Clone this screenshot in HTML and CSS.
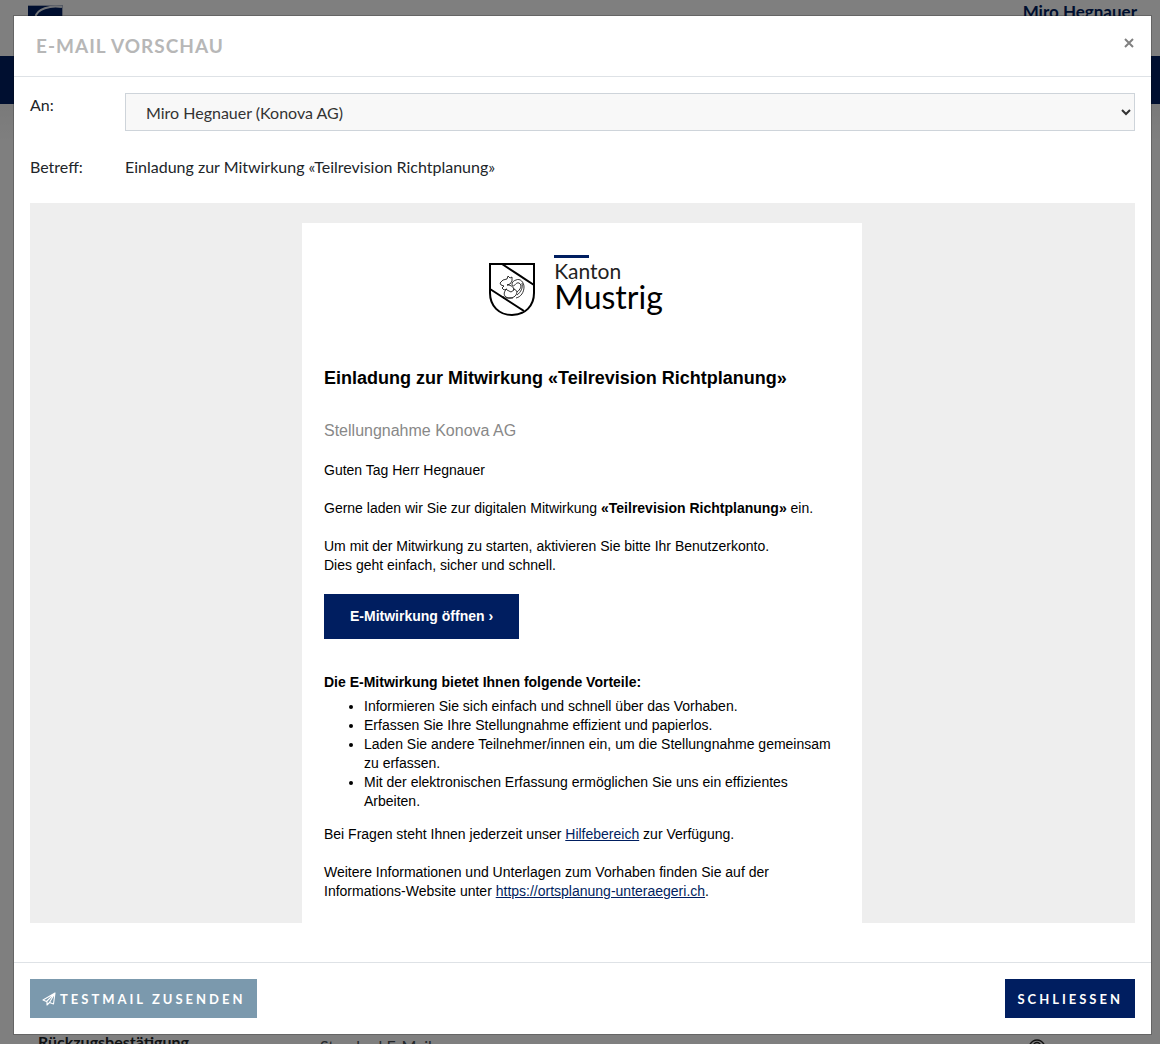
FILE: index.html
```html
<!DOCTYPE html>
<html lang="de">
<head>
<meta charset="utf-8">
<title>E-Mail Vorschau</title>
<link rel="stylesheet" href="styles.css">
</head>
<body>
<div class="page" aria-hidden="true">
  <div class="page-header">
    <svg class="page-logo" viewBox="0 0 35 35"><rect width="35" height="35" fill="#001e60"/><path d="M34.500 .5v34M0 .5h35" stroke="#aab4c8" stroke-width="1"/><path d="M34 2C22 0 9 4 7.500 12v10" fill="none" stroke="#e4e8ee" stroke-width="2"/></svg>
    <span class="page-user">Miro Hegnauer</span>
  </div>
  <div class="page-nav"></div>
  <div class="page-content">
    <div class="page-row">
      <strong class="row-name">Rückzugsbestätigung</strong>
      <span class="row-kind">Standard E-Mail</span>
      <svg class="row-icon" viewBox="0 0 18 14" fill="none" stroke="#222" stroke-width="1.5"><path d="M1 7C3 3 6 1 9 1s6 2 8 6c-2 4-5 6-8 6S3 11 1 7z"/><circle cx="9" cy="7" r="3.500"/></svg>
    </div>
  </div>
</div>
<div class="backdrop"></div>
<div class="modal" role="dialog" aria-labelledby="modal-title">
  <header class="modal-header">
    <h1 class="modal-title" id="modal-title">E-MAIL VORSCHAU</h1>
    <button class="close" type="button" aria-label="Schliessen"><svg viewBox="0 0 10 10" width="10" height="10"><path d="M1 1l8 8M9 1L1 9" stroke="#808080" stroke-width="2"/></svg></button>
  </header>
  <main class="modal-body">
    <div class="field">
      <label class="field-label" for="recipient">An:</label>
      <select class="recipient" id="recipient"><option>Miro Hegnauer (Konova AG)</option></select>
    </div>
    <div class="field">
      <span class="field-label">Betreff:</span>
      <span class="subject">Einladung zur Mitwirkung «Teilrevision Richtplanung»</span>
    </div>
    <div class="preview">
      <article class="mail">
        <div class="brand">
          <svg class="shield" viewBox="0 0 47 54" fill="none" stroke="#000">
            <path d="M1 1h44v29c0 13-9 22-22 22S1 43 1 30z" stroke-width="2"/>
            <path d="M13 1l32 21M1 26l34 22" stroke-width="2"/>
            <path d="M15 23l-3-1-1-2 3-3 4-1 1-3 2 2 2-1 0 4-2 3-3 1c4 0 7 2 7 5l-3 2-4-2M15 23l-2 2 2 2 3-1M18 26c-3 2-4 6-1 8 3 2 8 1 10-2 2-3 0-6-3-6M15 33l-1 2h10M27 35c5-1 8-6 8-11s-4-9-8-7c-4 1-5 5-3 6 2 0 3-4 6-3 4 2 1 7-2 9M33 20c1 5-1 9-5 12" stroke-width=".8"/>
          </svg>
          <div class="brand-name">
            <span class="brand-top">Kanton</span>
            <span class="brand-main">Mustrig</span>
          </div>
        </div>
        <h2 class="mail-title">Einladung zur Mitwirkung «Teilrevision Richtplanung»</h2>
        <p class="mail-sub">Stellungnahme Konova AG</p>
        <p>Guten Tag Herr Hegnauer</p>
        <p>Gerne laden wir Sie zur digitalen Mitwirkung <strong>«Teilrevision Richtplanung»</strong> ein.</p>
        <p>Um mit der Mitwirkung zu starten, aktivieren Sie bitte Ihr Benutzerkonto.<br>Dies geht einfach, sicher und schnell.</p>
        <a class="mail-button" href="#">E-Mitwirkung öffnen ›</a>
        <h3 class="mail-heading">Die E-Mitwirkung bietet Ihnen folgende Vorteile:</h3>
        <ul class="benefits">
          <li>Informieren Sie sich einfach und schnell über das Vorhaben.</li>
          <li>Erfassen Sie Ihre Stellungnahme effizient und papierlos.</li>
          <li>Laden Sie andere Teilnehmer/innen ein, um die Stellungnahme gemeinsam zu erfassen.</li>
          <li>Mit der elektronischen Erfassung ermöglichen Sie uns ein effizientes Arbeiten.</li>
        </ul>
        <p>Bei Fragen steht Ihnen jederzeit unser <a href="#">Hilfebereich</a> zur Verfügung.</p>
        <p>Weitere Informationen und Unterlagen zum Vorhaben finden Sie auf der Informations-Website unter <a href="#">https://ortsplanung-unteraegeri.ch</a>.</p>
      </article>
    </div>
  </main>
  <footer class="modal-footer">
    <button class="btn btn-test" type="button"><svg viewBox="0 0 14 14" width="14" height="14" fill="none" stroke="#fff" stroke-width="1.1" stroke-linejoin="round"><path d="M13 1L1 8l3.500 1.500L13 1l-1.500 11-4-1.500L5 13V9.500M13 1L7.500 10.500"/></svg>TESTMAIL ZUSENDEN</button>
    <button class="btn btn-close" type="button">SCHLIESSEN</button>
  </footer>
</div>
</body>
</html>
```
FILE: styles.css
```css
* { box-sizing: border-box; }

body {
  margin: 0;
  padding: 15px 8px 9px 13px;
  font-family: Lato, sans-serif;
  font-size: 16px;
  line-height: 24px;
  color: #212529;
}

/* Page behind the dialog */
.page {
  position: fixed;
  inset: 0;
  display: flex;
  flex-direction: column;
  overflow: hidden;
  background: #fff;
}
.page-header {
  display: flex;
  justify-content: space-between;
  height: 56px;
  padding: 0 23px 0 28px;
}
.page-logo { width: 35px; height: 35px; margin-top: 5px; }
.page-user { font-size: 17px; font-weight: 700; color: #001e60; }
.page-nav { height: 48px; background: #001e60; }
.page-content {
  flex: 1;
  display: flex;
  align-items: flex-end;
  background: linear-gradient(#f4f4f4, #fff 40px);
}
.page-row {
  flex: 1;
  display: grid;
  grid-template-columns: 282px 1fr 132px;
  height: 14px;
  padding-left: 38px;
}
.row-name { font-size: 16px; }
.row-kind { padding-top: 4px; font-size: 16px; color: #495057; }
.row-icon { width: 18px; height: 14px; margin-top: 9px; }
.backdrop { position: fixed; inset: 0; background: rgba(0, 0, 0, .5); }

/* Dialog */
.modal {
  position: relative;
  background: #fff;
  background-clip: padding-box;
  border: 1px solid rgba(0, 0, 0, .2);
}
.modal-header {
  display: flex;
  justify-content: space-between;
  padding: 18px 16px 18px 22px;
  border-bottom: 1px solid #dee2e6;
}
.modal-title {
  margin: 0;
  font-size: 19px;
  line-height: 24px;
  letter-spacing: 1px;
  color: #b7b7b7;
}
.close {
  display: flex;
  align-self: flex-start;
  padding: 4px 1px;
  border: 0;
  background: none;
}
.modal-body { padding: 16px 16px 39px; }
.field { display: flex; margin-bottom: 24px; }
.field-label { width: 95px; }
.recipient {
  flex: 1;
  height: 38px;
  padding: 0 0 0 16px;
  border: 1px solid #ced4da;
  border-radius: 0;
  background: #f8f8f8;
  font: inherit;
  color: #333;
}
.preview {
  display: flex;
  justify-content: center;
  height: 720px;
  padding: 20px 1px 0 0;
  overflow: hidden;
  background: #eee;
}

/* Mail */
.mail {
  width: 560px;
  padding: 31px 22px;
  background: #fff;
  font-family: "Liberation Sans", Arial, sans-serif;
  font-size: 14px;
  line-height: 19px;
  color: #000;
}
.mail p { margin: 0 0 19px; }
.mail a { color: #001e60; }
.brand {
  display: flex;
  justify-content: center;
  gap: 18px;
  height: 64px;
  margin-bottom: 48px;
  padding-right: 12px;
  font-family: Lato, sans-serif;
}
.shield { width: 47px; height: 54px; margin-top: 9px; }
.brand-name { display: flex; flex-direction: column; }
.brand-name::before { content: ""; width: 35px; height: 3px; margin-top: 1px; background: #001e60; }
.brand-top { font-size: 21px; line-height: 26px; color: #222; }
.brand-main { font-size: 32px; line-height: 26px; }
.mail-title { margin: 0 0 31px; font-size: 18px; line-height: 24px; }
.mail .mail-sub { margin-bottom: 21px; font-size: 16px; color: #888; }
.mail .mail-button {
  display: inline-block;
  margin-bottom: 34px;
  padding: 13px 26px;
  background: #001e60;
  color: #fff;
  font-weight: 700;
  text-decoration: none;
}
.mail-heading { margin: 0 0 5px; font-size: 14px; }
.benefits { margin: 0 0 14px; padding-left: 40px; }

.modal-footer {
  display: flex;
  justify-content: space-between;
  padding: 16px;
  border-top: 1px solid #dee2e6;
}
.btn {
  display: flex;
  align-items: center;
  gap: 4px;
  height: 39px;
  padding: 0 12px;
  border: 0;
  font: 700 13px/20px Lato, sans-serif;
  letter-spacing: 3px;
  color: #fff;
}
.btn-test { background: #7b99ad; }
.btn-close { background: #001e60; }
```
